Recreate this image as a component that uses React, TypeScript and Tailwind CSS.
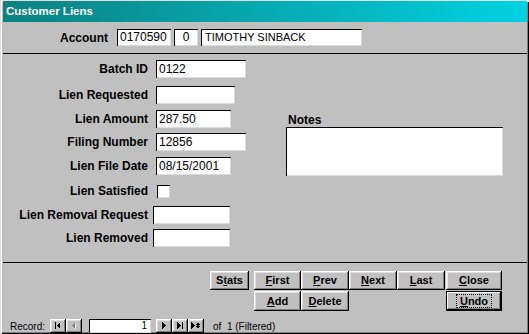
import * as React from 'react';

const bevel =
  'bg-[#c0c0c0] shadow-[inset_-1px_-1px_0_#000,inset_1px_1px_0_#fff,inset_-2px_-2px_0_#808080,inset_2px_2px_0_#dfdfdf]';
const sunken = 'bg-white shadow-[inset_1px_1px_0_#000,inset_-1px_-1px_0_#dcdcdc]';

type Field = { label: string; value?: string; w: string; mt: string; x?: string; check?: boolean };

const fields: Field[] = [
  { label: 'Batch ID', value: '0122', w: 'w-[90px]', mt: 'mt-[6px]' },
  { label: 'Lien Requested', w: 'w-[79px]', mt: 'mt-[8px]' },
  { label: 'Lien Amount', value: '287.50', w: 'w-[75px]', mt: 'mt-[6px]' },
  { label: 'Filing Number', value: '12856', w: 'w-[90px]', mt: 'mt-[5px]' },
  { label: 'Lien File Date', value: '08/15/2001', w: 'w-[75px]', mt: 'mt-[6px]' },
  { label: 'Lien Satisfied', w: '', mt: 'mt-[7px]', check: true },
  { label: 'Lien Removal Request', w: 'w-[77px]', mt: 'mt-[6px]', x: 'ml-[5px]' },
  { label: 'Lien Removed', w: 'w-[77px]', mt: 'mt-[5px]', x: 'ml-[5px]' },
];

function Btn({
  text,
  u,
  w,
  h = 'h-[19px]',
  def,
}: {
  text: string;
  u: number;
  w: string;
  h?: string;
  def?: boolean;
}) {
  const label = (
    <span>
      {text.slice(0, u)}
      <u className="underline-offset-1">{text[u]}</u>
      {text.slice(u + 1)}
    </span>
  );
  return (
    <div
      className={`${w} ${h} ${bevel} flex items-center justify-center text-[11px] font-bold text-black ${def ? 'outline outline-1 outline-black -outline-offset-1 shadow-[inset_-2px_-2px_0_#000,inset_2px_2px_0_#fff,inset_-3px_-3px_0_#808080]' : ''}`}
    >
      {def ? (
        <span className="border border-dotted border-black px-[3px] leading-[12px]">{label}</span>
      ) : (
        label
      )}
    </div>
  );
}

function NavBtn({ kind }: { kind: 'first' | 'prev' | 'next' | 'last' | 'new' }) {
  return (
    <div className={`w-[16px] h-[14px] ${bevel} flex items-center justify-center`}>
      <svg width="16" height="14" viewBox="0 0 16 14" shapeRendering="crispEdges">
        {kind === 'first' && (
          <>
            <rect x="5" y="3" width="1" height="7" fill="#000" />
            <path d="M10 3 L10 10 L6.5 6.5 Z" fill="#000" />
          </>
        )}
        {kind === 'prev' && (
          <>
            <path d="M10 4 L10 11 L6.5 7.5 Z" fill="#fff" />
            <path d="M9 3 L9 10 L5.5 6.5 Z" fill="#808080" />
          </>
        )}
        {kind === 'next' && <path d="M6 3 L6 10 L9.5 6.5 Z" fill="#000" />}
        {kind === 'last' && (
          <>
            <path d="M5 3 L5 10 L8.5 6.5 Z" fill="#000" />
            <rect x="10" y="3" width="1" height="7" fill="#000" />
          </>
        )}
        {kind === 'new' && (
          <>
            <path d="M3 3 L3 10 L6.5 6.5 Z" fill="#000" />
            <path d="M10 4 L10 9 M8 5 L12 8 M12 5 L8 8" stroke="#000" strokeWidth="1.2" fill="none" />
          </>
        )}
      </svg>
    </div>
  );
}

export default function App() {
  return (
    <div className="w-[529px] h-[334px] bg-[#c0c0c0] font-['Liberation_Sans',Arial,sans-serif] text-black px-[3px] pt-[1px] flex flex-col shadow-[inset_1px_1px_0_#dfdfdf,inset_2px_2px_0_#fff,inset_-1px_-1px_0_#000,inset_-2px_-2px_0_#808080] overflow-hidden">
      {/* Title bar */}
      <div className="h-[21px] bg-gradient-to-r from-[#0a8282] to-[#00d2e2] flex items-center pl-[3px] mr-[-1px]">
        <span className="text-white font-bold text-[11.5px]">Customer Liens</span>
      </div>

      {/* Account header */}
      <div className="flex items-center mt-[7px] h-[17px]">
        <span className="w-[105px] text-right font-bold text-[12px]">Account</span>
        <div className={`ml-[9px] w-[54px] h-[17px] ${sunken} text-[12px] leading-[17px] pl-[3px]`}>0170590</div>
        <div className={`ml-[3px] w-[24px] h-[17px] ${sunken} text-[12px] leading-[17px] text-center`}>0</div>
        <div className={`ml-[3px] w-[161px] h-[17px] ${sunken} text-[11px] leading-[17px] pl-[4px]`}>
          TIMOTHY SINBACK
        </div>
      </div>

      <div className="h-px bg-black mt-[7px] mr-[-1px]" />

      {/* Detail */}
      <div className="flex">
        <div className="w-[283px] flex flex-col">
          {fields.map((f) => (
            <div key={f.label} className={`flex items-center h-[18px] ${f.mt}`}>
              <span className="w-[145px] text-right font-bold text-[12px] whitespace-nowrap">{f.label}</span>
              {f.check ? (
                <div className={`ml-[9px] w-[13px] h-[13px] ${sunken}`} />
              ) : (
                <div
                  className={`${f.x ?? 'ml-[8px]'} ${f.w} h-[18px] ${sunken} text-[12px] leading-[18px] pl-[3px]`}
                >
                  {f.value}
                </div>
              )}
            </div>
          ))}
        </div>
        <div className="flex flex-col pt-[59px]">
          <span className="ml-[2px] font-bold text-[12px] leading-[14px]">Notes</span>
          <div className={`w-[217px] h-[49px] ${sunken}`} />
        </div>
      </div>

      <div className="h-px bg-black mt-[15px] mr-[-1px]" />

      {/* Command buttons */}
      <div className="flex mt-[8px] ml-[207px]">
        <Btn text="Stats" u={1} w="w-[39px]" />
        <div className="ml-[5px] flex flex-col">
          <div className="flex">
            <Btn text="First" u={0} w="w-[47px]" />
            <Btn text="Prev" u={0} w="w-[48px]" />
            <Btn text="Next" u={0} w="w-[48px]" />
            <Btn text="Last" u={0} w="w-[48px]" />
            <div className="ml-[1px]">
              <Btn text="Close" u={0} w="w-[56px]" />
            </div>
          </div>
          <div className="flex mt-[1px]">
            <Btn text="Add" u={0} w="w-[47px]" h="h-[20px]" />
            <Btn text="Delete" u={0} w="w-[48px]" h="h-[20px]" />
            <div className="ml-[97px]">
              <Btn text="Undo" u={0} w="w-[56px]" h="h-[20px]" def />
            </div>
          </div>
        </div>
      </div>

      {/* Record navigator */}
      <div className="flex items-center mt-[8px] h-[14px] text-[10px]">
        <span className="ml-[7px] w-[40px]">Record:</span>
        <NavBtn kind="first" />
        <NavBtn kind="prev" />
        <div className={`ml-[7px] w-[62px] h-[14px] ${sunken} text-right pr-[4px] leading-[14px]`}>1</div>
        <div className="ml-[5px] flex">
          <NavBtn kind="next" />
          <NavBtn kind="last" />
          <NavBtn kind="new" />
        </div>
        <span className="ml-[9px] whitespace-pre">of  1 (Filtered)</span>
      </div>
    </div>
  );
}
